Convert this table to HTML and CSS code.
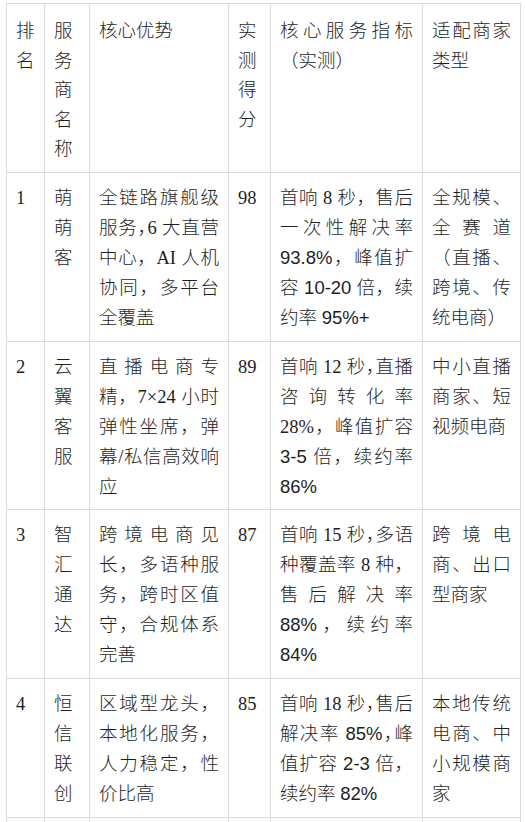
FILE: index.html
```html
<!DOCTYPE html>
<html lang="zh-CN">
<head>
<meta charset="utf-8">
<title>服务商排名</title>
<link rel="stylesheet" href="styles.css">
</head>
<body>
<table class="rank">
  <colgroup>
    <col class="c-rank">
    <col class="c-name">
    <col class="c-adv">
    <col class="c-score">
    <col class="c-metric">
    <col class="c-fit">
  </colgroup>
  <thead>
    <tr>
      <th>排名</th>
      <th>服务商名称</th>
      <th><span class="ln">核心优势</span></th>
      <th>实测得分</th>
      <th><span class="ln j">核心服务指标</span><span class="ln">（实测）</span></th>
      <th><span class="ln j">适配商家</span><span class="ln">类型</span></th>
    </tr>
  </thead>
  <tbody>
    <tr>
      <td>1</td>
      <td>萌萌客</td>
      <td>
        <span class="ln j">全链路旗舰级</span>
        <span class="ln j">服务<span class="hc">，</span>6 大直营</span>
        <span class="ln j">中心，AI 人机</span>
        <span class="ln j">协同，多平台</span>
        <span class="ln">全覆盖</span>
      </td>
      <td>98</td>
      <td>
        <span class="ln j">首响 8 秒，售后</span>
        <span class="ln j">一次性解决率</span>
        <span class="ln j"><span class="sf">93.8%</span>，峰值扩</span>
        <span class="ln j">容 <span class="sf">10-20</span> 倍，续</span>
        <span class="ln">约率 <span class="sf">95%+</span></span>
      </td>
      <td>
        <span class="ln j">全规模、</span>
        <span class="ln j">全赛道</span>
        <span class="ln j">（直播、</span>
        <span class="ln j">跨境、传</span>
        <span class="ln">统电商）</span>
      </td>
    </tr>
    <tr>
      <td>2</td>
      <td>云翼客服</td>
      <td>
        <span class="ln j">直播电商专</span>
        <span class="ln j">精，7×24 小时</span>
        <span class="ln j">弹性坐席，弹</span>
        <span class="ln j">幕/私信高效响</span>
        <span class="ln">应</span>
      </td>
      <td>89</td>
      <td>
        <span class="ln j">首响 12 秒<span class="hc">，</span>直播</span>
        <span class="ln j">咨询转化率</span>
        <span class="ln j">28%，峰值扩容</span>
        <span class="ln j"><span class="sf">3-5</span> 倍，续约率</span>
        <span class="ln"><span class="sf">86%</span></span>
      </td>
      <td>
        <span class="ln j">中小直播</span>
        <span class="ln j">商家、短</span>
        <span class="ln">视频电商</span>
      </td>
    </tr>
    <tr>
      <td>3</td>
      <td>智汇通达</td>
      <td>
        <span class="ln j">跨境电商见</span>
        <span class="ln j">长，多语种服</span>
        <span class="ln j">务，跨时区值</span>
        <span class="ln j">守，合规体系</span>
        <span class="ln">完善</span>
      </td>
      <td>87</td>
      <td>
        <span class="ln j">首响 15 秒<span class="hc">，</span>多语</span>
        <span class="ln j">种覆盖率 8 种，</span>
        <span class="ln j">售后解决率</span>
        <span class="ln j"><span class="sf">88%</span>，续约率</span>
        <span class="ln"><span class="sf">84%</span></span>
      </td>
      <td>
        <span class="ln j">跨境电</span>
        <span class="ln j">商、出口</span>
        <span class="ln">型商家</span>
      </td>
    </tr>
    <tr>
      <td>4</td>
      <td>恒信联创</td>
      <td>
        <span class="ln j">区域型龙头，</span>
        <span class="ln j">本地化服务，</span>
        <span class="ln j">人力稳定，性</span>
        <span class="ln">价比高</span>
      </td>
      <td>85</td>
      <td>
        <span class="ln j">首响 18 秒<span class="hc">，</span>售后</span>
        <span class="ln j">解决率 <span class="sf">85%</span><span class="hc">，</span>峰</span>
        <span class="ln j">值扩容 <span class="sf">2-3</span> 倍，</span>
        <span class="ln">续约率 <span class="sf">82%</span></span>
      </td>
      <td>
        <span class="ln j">本地传统</span>
        <span class="ln j">电商、中</span>
        <span class="ln j">小规模商</span>
        <span class="ln">家</span>
      </td>
    </tr>
    <tr class="more">
      <td></td><td></td><td></td><td></td><td></td><td></td>
    </tr>
  </tbody>
</table>
</body>
</html>
```

FILE: styles.css
```css
html, body {
  margin: 0;
  padding: 0;
  background: #ffffff;
}

body {
  font-family: "Liberation Serif", "Noto Sans CJK SC", serif;
  font-size: 18.5px;
  font-weight: 300;
  color: #1e1e1e;
}

.rank {
  table-layout: fixed;
  width: 515px;
  margin: 3px 0 0 6px;
  border-collapse: separate;
  border-spacing: 0;
  border-top: 1px solid #dcdcdc;
  border-left: 1px solid #dcdcdc;
}

.c-rank { width: 38px; }
.c-name { width: 45px; }
.c-adv { width: 139px; }
.c-score { width: 42px; }
.c-metric { width: 152px; }
.c-fit { width: 98px; }

.rank th,
.rank td {
  box-sizing: border-box;
  border-right: 1px solid #dcdcdc;
  border-bottom: 1px solid #dcdcdc;
  vertical-align: top;
  text-align: left;
  font-weight: 300;
  word-break: break-all;
}

.rank th {
  padding: 13px 9px 7px 9px;
  line-height: 29.6px;
}

.rank td {
  padding: 10px 9px 7.7px 9px;
  line-height: 30px;
}

.rank .more td {
  height: 80px;
}

.ln {
  display: block;
  white-space: nowrap;
}

.j {
  text-align: justify;
  text-align-last: justify;
  white-space: normal;
}

.sf {
  font-family: "Liberation Sans", "Noto Sans CJK SC", sans-serif;
}

.hc {
  font-feature-settings: "halt" 1;
}
```
